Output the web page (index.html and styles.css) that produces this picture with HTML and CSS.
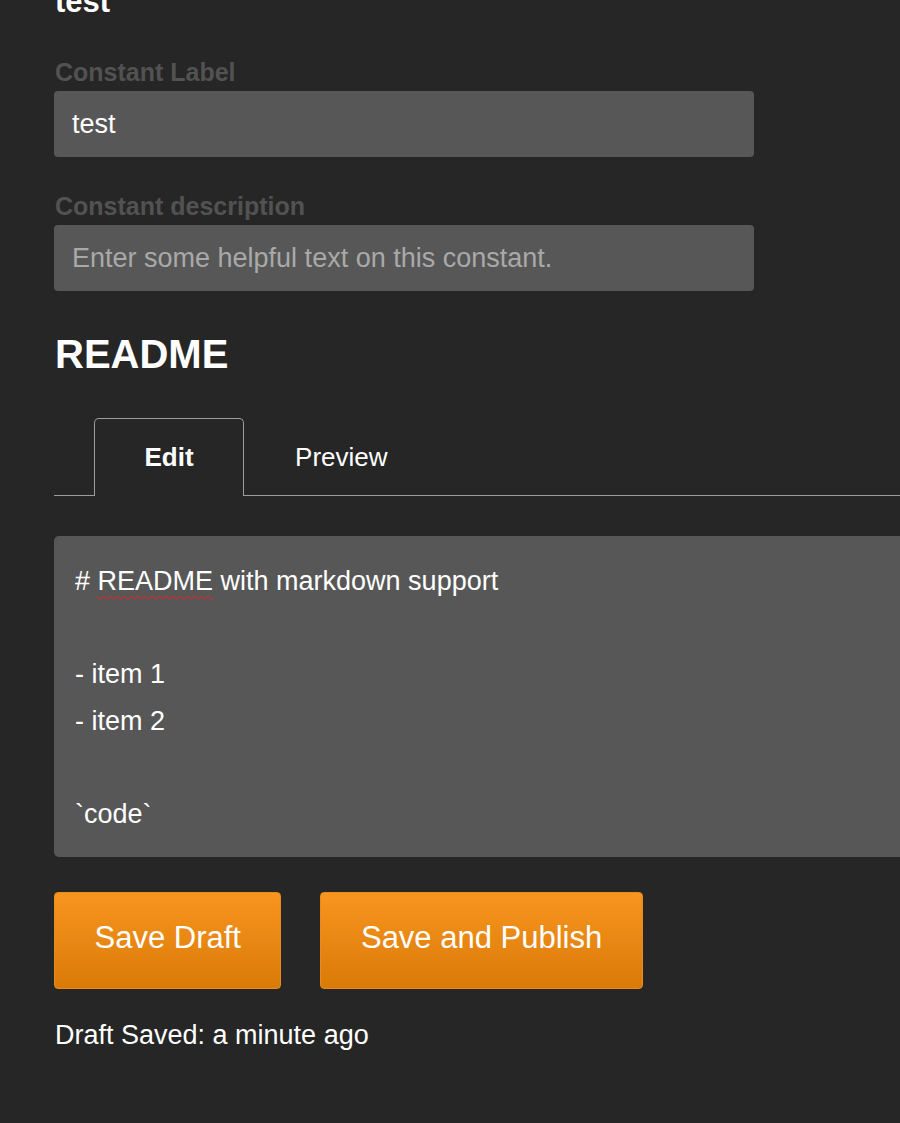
FILE: index.html
```html
<!DOCTYPE html>
<html>
<head>
<meta charset="utf-8">
<link rel="stylesheet" href="styles.css">
</head>
<body>
<div class="page">
  <h2 class="title">test</h2>
  <div class="field first">
    <label class="label">Constant Label</label>
    <div class="input">test</div>
  </div>
  <div class="field">
    <label class="label">Constant description</label>
    <div class="input placeholder">Enter some helpful text on this constant.</div>
  </div>
  <h1 class="heading">README</h1>
  <div class="readme">
    <div class="tabs">
      <div class="tab-spacer"></div>
      <div class="tab active">Edit</div>
      <div class="tab">Preview</div>
      <div class="tab-fill"></div>
    </div>
    <div class="editor">
      <div class="line"># <span class="misspelled">README</span> with markdown support</div>
      <div class="line">&nbsp;</div>
      <div class="line">- item 1</div>
      <div class="line">- item 2</div>
      <div class="line">&nbsp;</div>
      <div class="line">`code`</div>
    </div>
  </div>
  <div class="actions">
    <button class="btn">Save Draft</button>
    <button class="btn">Save and Publish</button>
  </div>
  <p class="status">Draft Saved: a minute ago</p>
</div>
</body>
</html>
```
FILE: styles.css
```css
html, body {
  margin: 0;
  padding: 0;
  background: #262626;
  overflow: hidden;
}
body {
  font-family: "Liberation Sans", Arial, sans-serif;
  color: #ffffff;
  width: 900px;
  height: 1123px;
}
.page {
  padding-left: 54px;
}
.title {
  margin: -16px 0 0 1px;
  font-size: 31px;
  line-height: 36px;
  font-weight: bold;
}
.field {
  display: flex;
  flex-direction: column;
  width: 700px;
}
.field.first {
  margin-top: 38px;
}
.field + .field {
  margin-top: 35px;
}
.label {
  font-size: 25px;
  line-height: 29px;
  font-weight: bold;
  color: #525252;
  margin: 0 0 4px 1px;
}
.input {
  height: 66px;
  box-sizing: border-box;
  background: #575757;
  border-radius: 4px;
  padding: 0 18px;
  font-size: 27px;
  display: flex;
  align-items: center;
  color: #ffffff;
}
.input.placeholder {
  color: #a9a9a9;
}
.heading {
  margin: 40px 0 0 1px;
  font-size: 40px;
  line-height: 46px;
  font-weight: bold;
}
.readme {
  width: 900px;
  margin-top: 41px;
}
.tabs {
  display: flex;
  align-items: flex-end;
  height: 78px;
}
.tab-spacer {
  width: 40px;
  border-bottom: 1.5px solid #9c9c9c;
}
.tab-fill {
  flex: 1;
  border-bottom: 1.5px solid #9c9c9c;
}
.tab {
  font-size: 26px;
  height: 78px;
  box-sizing: border-box;
  padding: 2px 51px 0;
  display: flex;
  align-items: center;
  justify-content: center;
  border-bottom: 1.5px solid #9c9c9c;
}
.tab.active {
  font-weight: bold;
  border: 1.5px solid #9c9c9c;
  border-bottom: none;
  border-radius: 5px 5px 0 0;
  padding: 0 49.5px;
}
.editor {
  margin-top: 40px;
  background: #575757;
  border-radius: 5px;
  padding: 22px 21px 20px;
  font-size: 27px;
  line-height: 46.5px;
  height: 321px;
  box-sizing: border-box;
}
.misspelled {
  text-decoration: underline wavy #ff1a1a;
  text-decoration-thickness: 1px;
  text-underline-offset: 5px;
}
.actions {
  display: flex;
  gap: 39px;
  margin-top: 35px;
}
.btn {
  font-family: "Liberation Sans", Arial, sans-serif;
  font-size: 31px;
  color: #ffffff;
  height: 97px;
  padding: 0 39.5px 5px;
  border: 1px solid #e98b1c;
  border-radius: 4px;
  background: linear-gradient(to bottom, #f7951f, #da7a07);
  cursor: pointer;
}
.status {
  margin: 31px 0 0 1px;
  font-size: 27px;
  line-height: 31px;
}
```
